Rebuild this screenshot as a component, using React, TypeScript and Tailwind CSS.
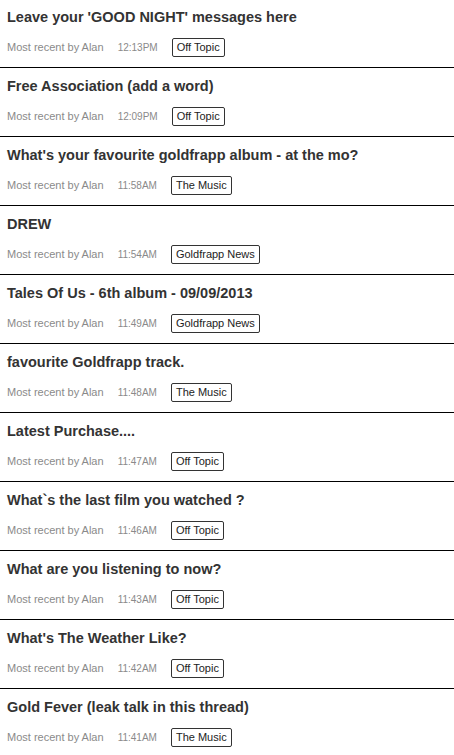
import React from 'react';

type Thread = {
  title: string;
  by: string;
  time: string;
  tag: string;
};

const threads: Thread[] = [
  { title: "Leave your 'GOOD NIGHT' messages here", by: 'Alan', time: '12:13PM', tag: 'Off Topic' },
  { title: 'Free Association (add a word)', by: 'Alan', time: '12:09PM', tag: 'Off Topic' },
  { title: "What's your favourite goldfrapp album - at the mo?", by: 'Alan', time: '11:58AM', tag: 'The Music' },
  { title: 'DREW', by: 'Alan', time: '11:54AM', tag: 'Goldfrapp News' },
  { title: 'Tales Of Us - 6th album - 09/09/2013', by: 'Alan', time: '11:49AM', tag: 'Goldfrapp News' },
  { title: 'favourite Goldfrapp track.', by: 'Alan', time: '11:48AM', tag: 'The Music' },
  { title: 'Latest Purchase....', by: 'Alan', time: '11:47AM', tag: 'Off Topic' },
  { title: 'What`s the last film you watched ?', by: 'Alan', time: '11:46AM', tag: 'Off Topic' },
  { title: 'What are you listening to now?', by: 'Alan', time: '11:43AM', tag: 'Off Topic' },
  { title: "What's The Weather Like?", by: 'Alan', time: '11:42AM', tag: 'Off Topic' },
  { title: 'Gold Fever (leak talk in this thread)', by: 'Alan', time: '11:41AM', tag: 'The Music' },
];

function ThreadRow({ t }: { t: Thread }) {
  return (
    <div className="border-b border-black px-[7px] pt-2 pb-[10px]">
      <div className="text-[14.5px] leading-5 font-bold text-[#333]">{t.title}</div>
      <div className="mt-[11px] flex items-center">
        <span className="text-[11px] text-[#8a8a8a]">Most recent by {t.by}</span>
        <span className="ml-[14px] text-[10px] text-[#8a8a8a]">{t.time}</span>
        <span className="ml-[14px] rounded-[2px] border border-[#333] px-[4px] text-[11px] leading-[17px] text-[#222]">
          {t.tag}
        </span>
      </div>
    </div>
  );
}

export default function App() {
  return (
    <div className="min-h-screen bg-white font-['Liberation_Sans',Arial,sans-serif] overflow-hidden">
      <div className="-mt-px">
        {threads.map((t, i) => (
          <ThreadRow key={i} t={t} />
        ))}
      </div>
    </div>
  );
}
